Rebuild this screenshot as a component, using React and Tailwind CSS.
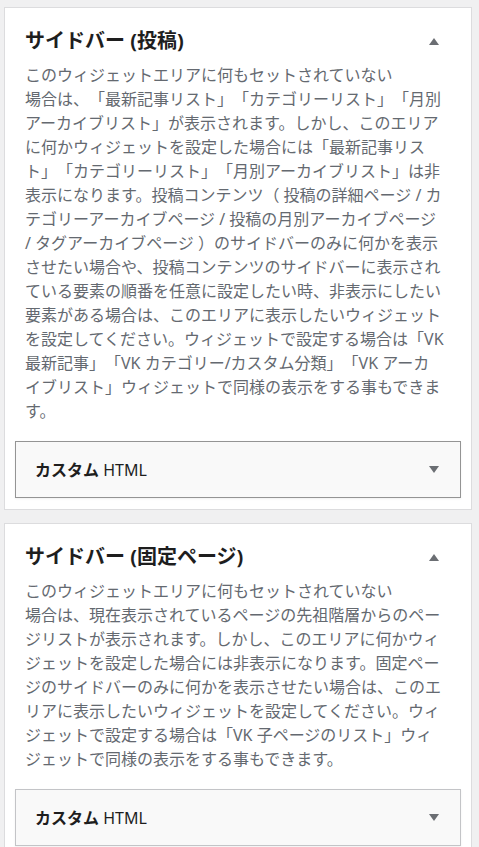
const font = {
  fontFamily: '"Noto Sans", "Noto Sans CJK JP", sans-serif',
};

const postLines = [
  "このウィジェットエリアに何もセットされていない",
  "場合は、「最新記事リスト」「カテゴリーリスト」「月別",
  "アーカイブリスト」が表示されます。しかし、このエリア",
  "に何かウィジェットを設定した場合には「最新記事リス",
  "ト」「カテゴリーリスト」「月別アーカイブリスト」は非",
  "表示になります。投稿コンテンツ（ 投稿の詳細ページ / カ",
  "テゴリーアーカイブページ / 投稿の月別アーカイブページ",
  "/ タグアーカイブページ ）のサイドバーのみに何かを表示",
  "させたい場合や、投稿コンテンツのサイドバーに表示され",
  "ている要素の順番を任意に設定したい時、非表示にしたい",
  "要素がある場合は、このエリアに表示したいウィジェット",
  "を設定してください。ウィジェットで設定する場合は「VK",
  "最新記事」「VK カテゴリー/カスタム分類」「VK アーカ",
  "イブリスト」ウィジェットで同様の表示をする事もできま",
  "す。",
];

const pageLines = [
  "このウィジェットエリアに何もセットされていない",
  "場合は、現在表示されているページの先祖階層からのペー",
  "ジリストが表示されます。しかし、このエリアに何かウィ",
  "ジェットを設定した場合には非表示になります。固定ペー",
  "ジのサイドバーのみに何かを表示させたい場合は、このエ",
  "リアに表示したいウィジェットを設定してください。ウィ",
  "ジェットで設定する場合は「VK 子ページのリスト」ウィ",
  "ジェットで同様の表示をする事もできます。",
];

const Triangle = ({ up }) => (
  <svg width="10" height="7" viewBox="0 0 10 7" className="shrink-0">
    <polygon points={up ? "5,0 10,7 0,7" : "0,0 10,0 5,7"} fill="#6b6e73" />
  </svg>
);

const SidebarArea = ({ title, lines, boxBorder }) => (
  <section className="bg-white border border-[#dcdcde] px-[10px] pt-[19px] pb-[11px]">
    <div className="flex items-center justify-between pl-[10px] pr-[22px] h-[28px]">
      <h2 className="text-[20px] leading-[28px] font-bold text-[#1e1e1e]">{title}</h2>
      <Triangle up />
    </div>
    <div className="mt-[8px] pl-[10px] text-[16px] leading-[24px] text-[#646970]">
      {lines.map((l, i) => (
        <div key={i} className="whitespace-nowrap">
          {l}
        </div>
      ))}
    </div>
    <div
      className={`mt-[18px] h-[57px] flex items-center justify-between pl-[19px] pr-[21px] bg-[#f9f9f9] border shadow-[0_1px_2px_rgba(0,0,0,0.06)] ${boxBorder}`}
    >
      <span className="text-[16px] font-semibold text-[#1e1e1e]">
        カスタム <span className="font-normal">HTML</span>
      </span>
      <Triangle />
    </div>
  </section>
);

export default function App() {
  return (
    <div
      className="min-h-screen bg-[#f0f0f1] pt-[7px] pl-[4px] pr-[7px] [text-spacing-trim:space-all]"
      style={font}
    >
      <div className="flex flex-col gap-[13px]">
        <SidebarArea title="サイドバー (投稿)" lines={postLines} boxBorder="border-[#949494]" />
        <SidebarArea title="サイドバー (固定ページ)" lines={pageLines} boxBorder="border-[#c3c4c7]" />
      </div>
    </div>
  );
}
